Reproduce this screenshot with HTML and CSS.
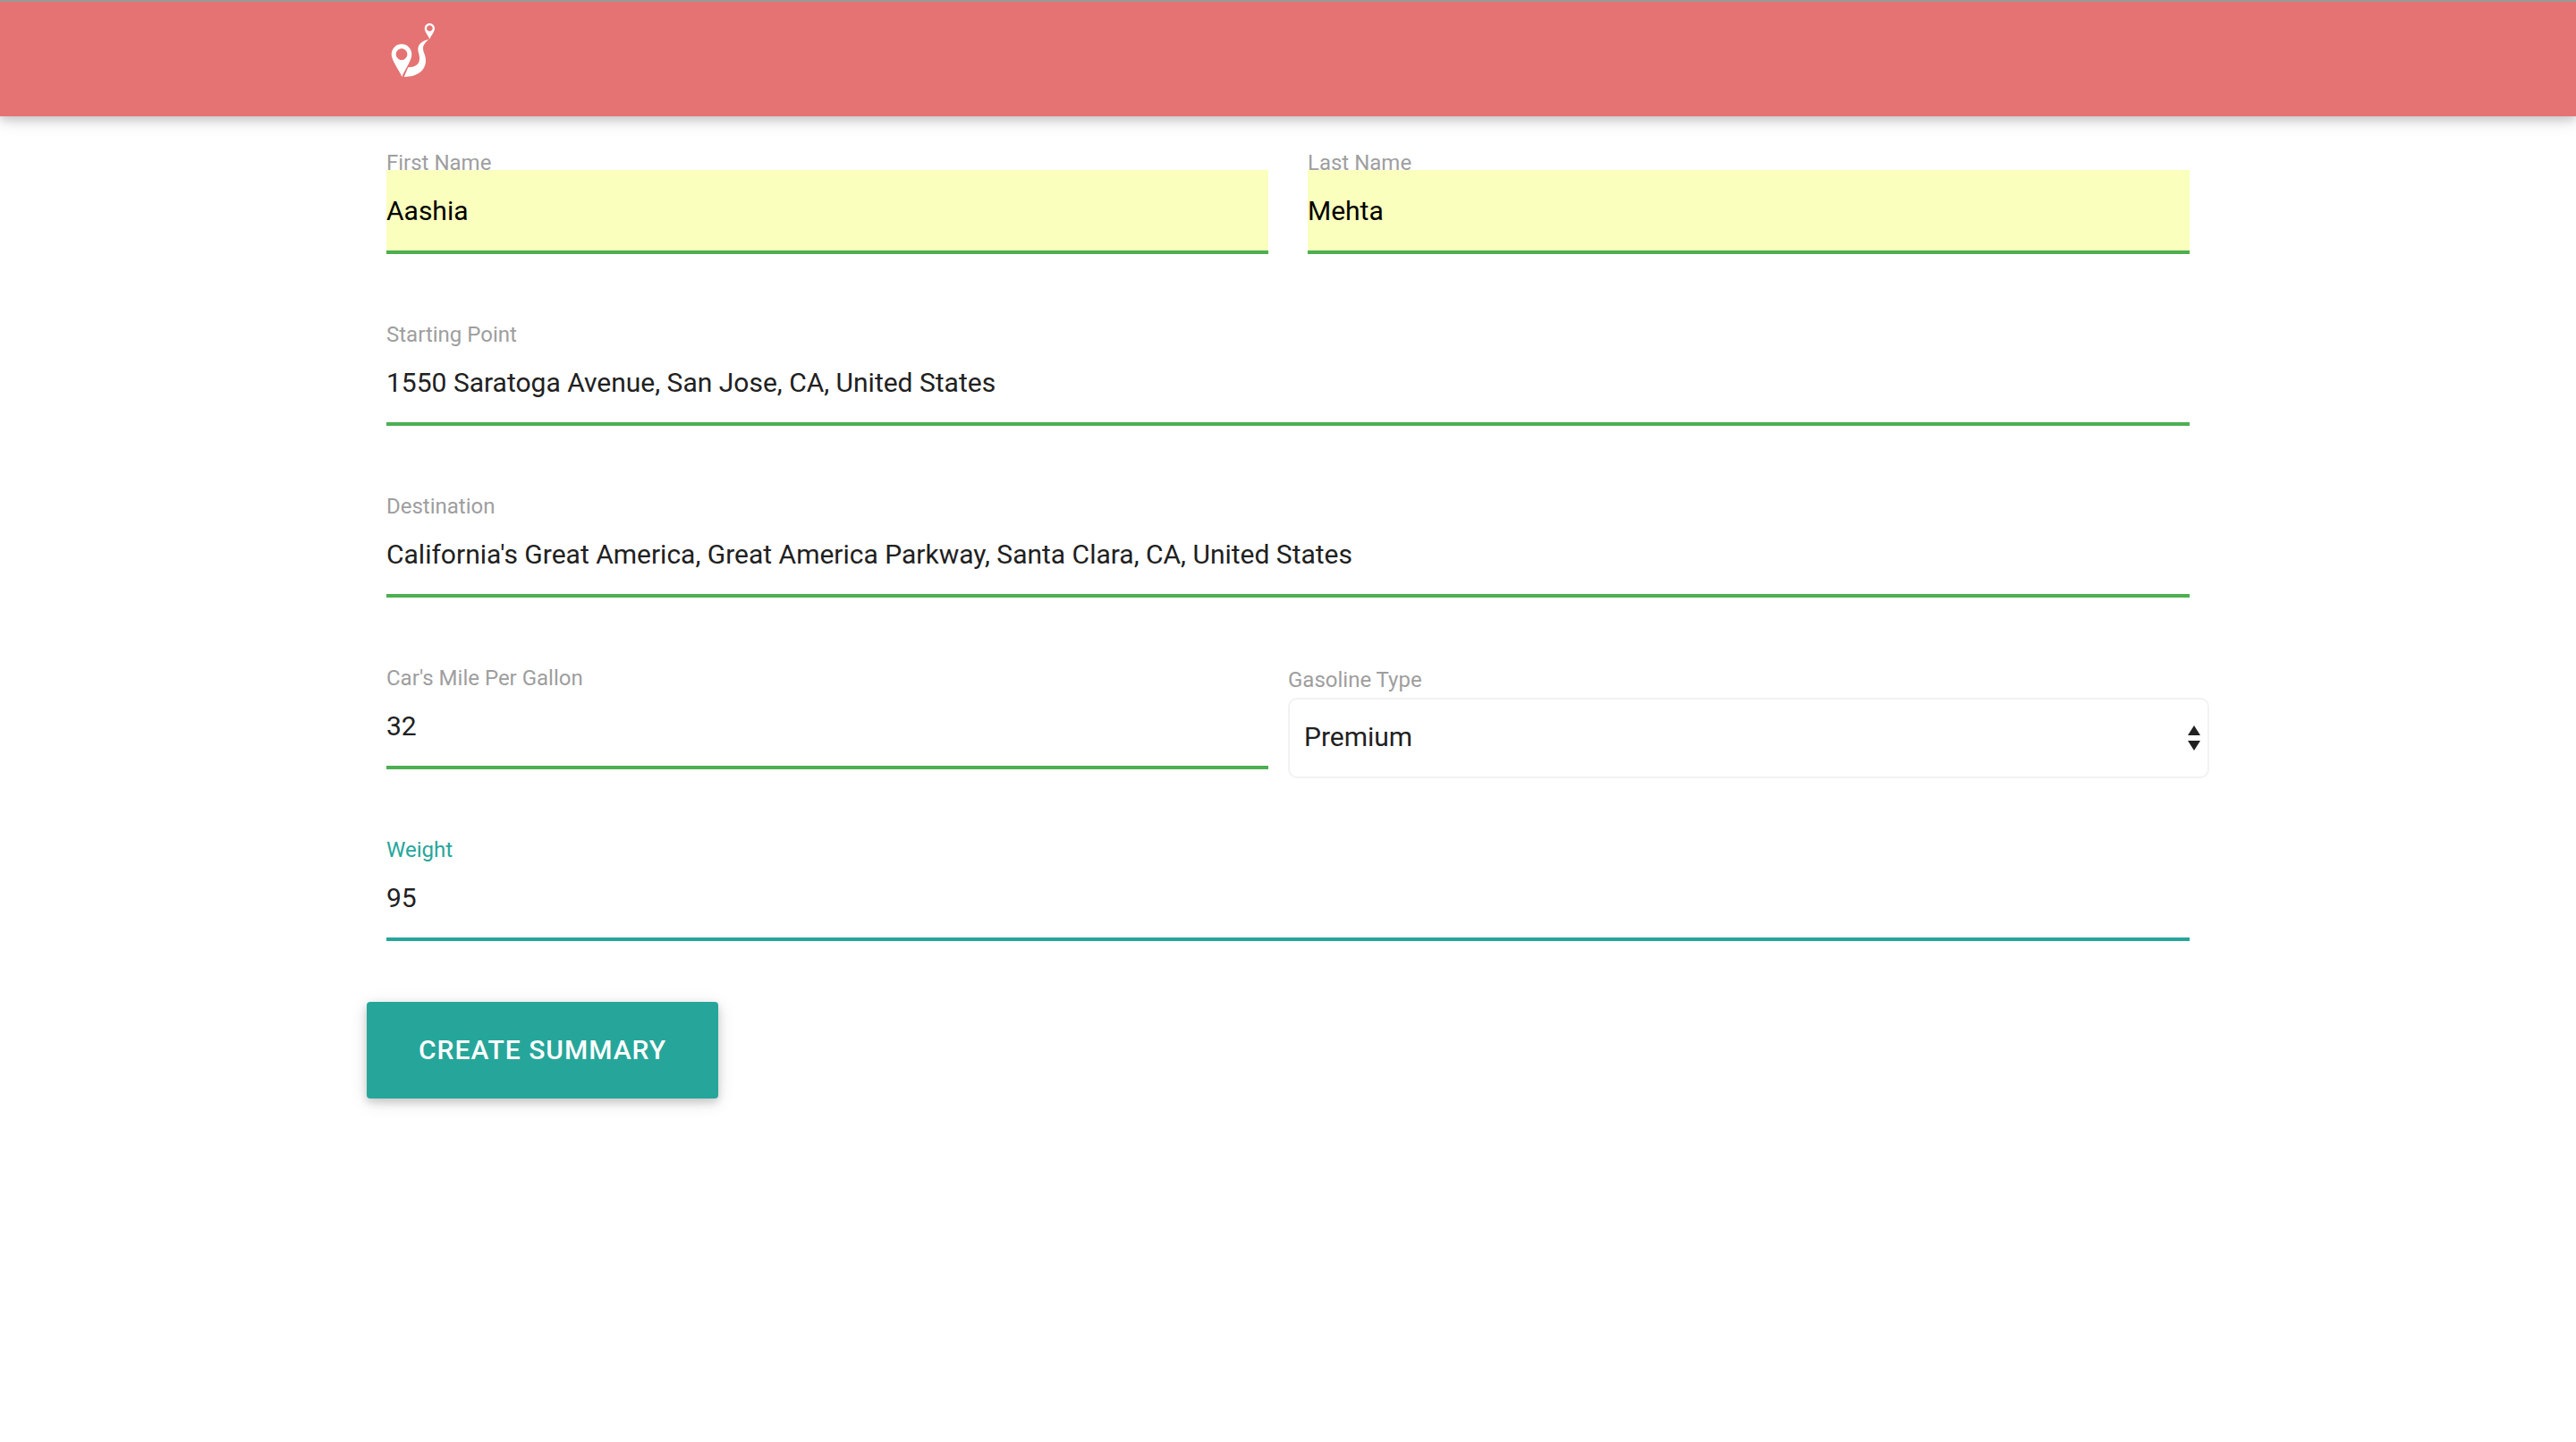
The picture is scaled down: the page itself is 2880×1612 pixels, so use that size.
FILE: index.html
```html
<!DOCTYPE html>
<html lang="en">
<head>
    <meta charset="UTF-8">
    <meta name="viewport" content="width=device-width, initial-scale=1.0">
    <title>Trip Summary</title>
    <link rel="stylesheet" href="styles.css">
</head>
<body>
    <nav>
        <div class="container">
            <a href="/" class="brand-logo" aria-label="Home">
                <svg viewBox="96 60 180 210" fill="#fff" fill-rule="evenodd">
                    <path d="M148 258 C143 240 113 205 113 182 A34 34 0 0 1 181 182 C181 205 153 240 148 258 Z M147 163 a19 19 0 1 0 0.1 0 Z"/>
                    <path d="M241 132 C239 122 224 107 224 95 A17 17 0 0 1 258 95 C258 107 243 122 241 132 Z M241 85 a10 10 0 1 0 0.1 0 Z"/>
                    <path d="M238 132 C216 137 202 148 202 165 C202 177 208 184 207 198 C206 218 191 225 169 226 L155 258 C200 258 228 237 228 202 C228 185 219 176 219 162 C219 149 229 141 238 132 Z"/>
                </svg>
            </a>
        </div>
    </nav>

    <main class="container">
        <form>
            <div class="row two-cols">
                <div class="input-field">
                    <label for="first_name">First Name</label>
                    <input type="text" id="first_name" class="valid autofill" value="Aashia">
                </div>
                <div class="input-field">
                    <label for="last_name">Last Name</label>
                    <input type="text" id="last_name" class="valid autofill" value="Mehta">
                </div>
            </div>

            <div class="row">
                <div class="input-field">
                    <label for="start">Starting Point</label>
                    <input type="text" id="start" class="valid" value="1550 Saratoga Avenue, San Jose, CA, United States">
                </div>
            </div>

            <div class="row">
                <div class="input-field">
                    <label for="destination">Destination</label>
                    <input type="text" id="destination" class="valid" value="California's Great America, Great America Parkway, Santa Clara, CA, United States">
                </div>
            </div>

            <div class="row two-cols">
                <div class="input-field">
                    <label for="mpg">Car's Mile Per Gallon</label>
                    <input type="text" id="mpg" class="valid" value="32">
                </div>
                <div class="select-field">
                    <label for="gas_type">Gasoline Type</label>
                    <div class="select-wrapper">
                        <select id="gas_type">
                            <option>Regular</option>
                            <option>Plus</option>
                            <option selected>Premium</option>
                        </select>
                        <svg class="caret" viewBox="0 0 14 28" fill="#212121">
                            <path d="M7 0 L14 11 H0 Z M0 17 H14 L7 28 Z"/>
                        </svg>
                    </div>
                </div>
            </div>

            <div class="row">
                <div class="input-field">
                    <label for="weight" class="active">Weight</label>
                    <input type="text" id="weight" class="active" value="95">
                </div>
            </div>

            <button type="submit" class="btn">Create Summary</button>
        </form>
    </main>
</body>
</html>
```

FILE: styles.css
```css
* {
    box-sizing: border-box;
}

body {
    font-family: Roboto, sans-serif;
    font-size: 30px;
    color: #212121;
    background: #fff;
    margin: 0;
    min-height: 100vh;
}

.container {
    width: 70%;
    margin: 0 auto;
}

nav {
    height: 130px;
    background-color: #e57373;
    border-top: 2px solid #999;
    box-shadow: 0 4px 10px rgba(0, 0, 0, 0.16), 0 4px 20px rgba(0, 0, 0, 0.12);
}

.brand-logo {
    display: inline-block;
    padding-top: 18px;
}

.brand-logo svg {
    display: block;
    width: 60px;
    height: 70px;
}

form {
    margin: 0 -22px;
    padding: 44px 0 60px;
}

.row {
    display: grid;
    min-height: 120px;
    margin-bottom: 72px;
}

.row.two-cols {
    grid-template-columns: 1fr 1fr;
}

.row:last-of-type {
    margin-bottom: 58px;
}

.input-field {
    padding: 0 22px;
}

.select-field {
    padding-top: 2px;
}

label {
    display: block;
    font-size: 24px;
    line-height: 16px;
    color: #9e9e9e;
}

label.active {
    color: #26a69a;
}

input[type="text"] {
    display: block;
    width: 100%;
    height: 94px;
    padding: 0;
    font-family: inherit;
    font-size: 30px;
    color: #212121;
    background-color: transparent;
    border: none;
    border-bottom: 4px solid #9e9e9e;
    border-radius: 0;
    outline: none;
}

input[type="text"].valid {
    border-bottom-color: #4caf50;
}

input[type="text"].active {
    border-bottom-color: #26a69a;
}

input[type="text"].autofill {
    color: #000;
    background-color: #faffbd;
}

.select-wrapper {
    position: relative;
    margin-top: 12px;
}

select {
    display: block;
    width: 100%;
    height: 90px;
    padding: 0 16px 4px;
    font-family: inherit;
    font-size: 30px;
    color: #212121;
    background-color: #fff;
    border: 2px solid #f2f2f2;
    border-radius: 10px;
    appearance: none;
    outline: none;
}

.caret {
    position: absolute;
    top: 31px;
    right: 10px;
    width: 14px;
    height: 28px;
    pointer-events: none;
}

.btn {
    display: block;
    height: 108px;
    padding: 0 58px 2px;
    font-family: inherit;
    font-size: 30px;
    font-weight: 500;
    letter-spacing: 1px;
    text-transform: uppercase;
    color: #fff;
    background-color: #26a69a;
    border: none;
    border-radius: 4px;
    box-shadow: 0 4px 10px rgba(0, 0, 0, 0.16), 0 4px 20px rgba(0, 0, 0, 0.12);
    cursor: pointer;
}

.btn:hover {
    background-color: #2bbbad;
}
```
